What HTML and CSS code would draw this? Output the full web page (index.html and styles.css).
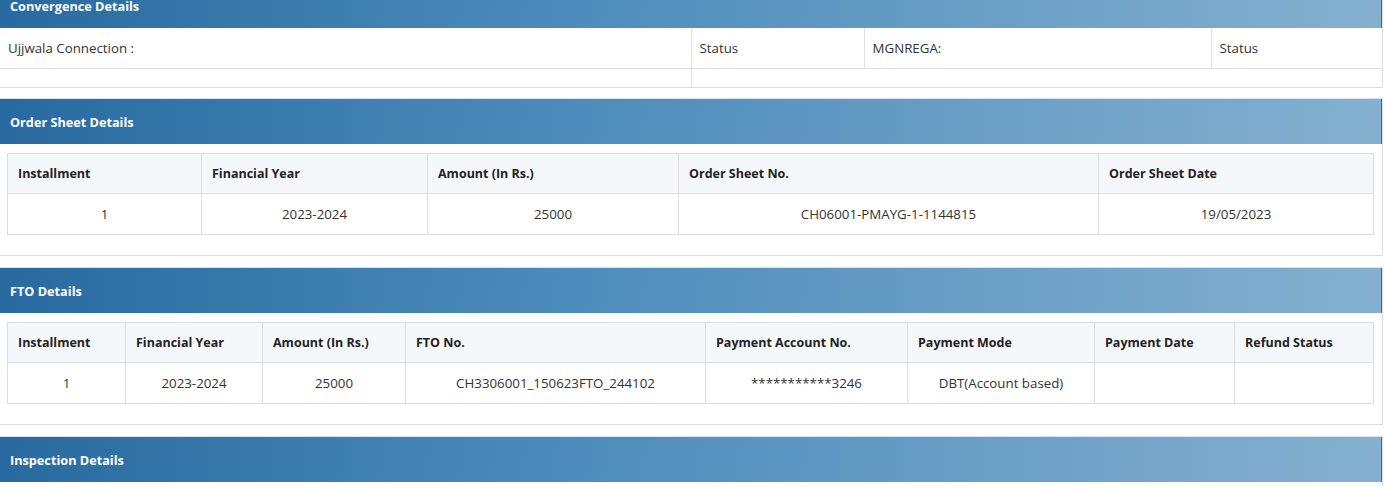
FILE: index.html
```html
<!DOCTYPE html>
<html>
<head>
<meta charset="utf-8">
<link rel="stylesheet" href="styles.css">
</head>
<body>
<div class="page">
  <section class="panel panel-first">
    <div class="panel-heading">Convergence Details</div>
    <table class="conv">
      <colgroup><col class="c1"><col class="c2"><col class="c3"><col class="c4"></colgroup>
      <tr class="conv-row"><td>Ujjwala Connection :</td><td>Status</td><td>MGNREGA:</td><td>Status</td></tr>
      <tr class="conv-empty"><td></td><td colspan="3"></td></tr>
    </table>
  </section>

  <section class="panel">
    <div class="panel-heading">Order Sheet Details</div>
    <div class="panel-body">
      <table class="grid">
        <colgroup><col class="o1"><col class="o2"><col class="o3"><col class="o4"><col class="o5"></colgroup>
        <tr class="head"><th>Installment</th><th>Financial Year</th><th>Amount (In Rs.)</th><th>Order Sheet No.</th><th>Order Sheet Date</th></tr>
        <tr class="body"><td>1</td><td>2023-2024</td><td>25000</td><td>CH06001-PMAYG-1-1144815</td><td>19/05/2023</td></tr>
      </table>
    </div>
  </section>

  <section class="panel">
    <div class="panel-heading">FTO Details</div>
    <div class="panel-body">
      <table class="grid">
        <colgroup><col class="f1"><col class="f2"><col class="f3"><col class="f4"><col class="f5"><col class="f6"><col class="f7"><col class="f8"></colgroup>
        <tr class="head"><th>Installment</th><th>Financial Year</th><th>Amount (In Rs.)</th><th>FTO No.</th><th>Payment Account No.</th><th>Payment Mode</th><th>Payment Date</th><th>Refund Status</th></tr>
        <tr class="body"><td>1</td><td>2023-2024</td><td>25000</td><td>CH3306001_150623FTO_244102</td><td>***********3246</td><td>DBT(Account based)</td><td></td><td></td></tr>
      </table>
    </div>
  </section>

  <section class="panel">
    <div class="panel-heading">Inspection Details</div>
    <div class="panel-body"></div>
  </section>
</div>
</body>
</html>
```

FILE: styles.css
```css
* { box-sizing: border-box; }
html, body { margin: 0; padding: 0; background: #fff; overflow: hidden; }
body {
  font-family: "Open Sans", "Noto Sans", sans-serif;
  font-size: 13.3px;
  color: #333;
}
.page { width: 1384px; }
.panel {
  width: 1384px;
  margin-left: -1px;
  margin-bottom: 11px;
  border: 1px solid #dddddd;
  border-top-color: #d8e3ee;
  background: #fff;
}
.panel-first { margin-top: -18px; margin-bottom: 10px; }
.panel-heading {
  height: 45px;
  display: flex;
  align-items: center;
  padding-left: 10px;
  color: #fff;
  font-weight: 700;
  font-size: 12.7px;
  background: linear-gradient(95deg, #286a9f 0%, #4b8bbb 40%, #6ea1c7 75%, #85b0d0 100%);
  border-right: 1px solid #3b6f9a;
}
.panel-body {
  padding: 9px 7px 20px 7px;
  min-height: 45px;
}
table { border-collapse: collapse; table-layout: fixed; }
.conv { width: 1382px; }
.conv td { border: 1px solid #e0e0e0; padding: 0 0 0 8px; }
.conv tr:first-child td { border-top: none; }
.conv td:first-child { border-left: none; }
.conv td:last-child { border-right: none; }
.conv tr:last-child td { border-bottom: none; }
.conv-row td { height: 40px; }
.conv-empty td { height: 19px; }
.conv .c1 { width: 691px; }
.conv .c2 { width: 173px; }
.conv .c3 { width: 347px; }
.conv .c4 { width: 171px; }

.grid { width: 1366px; }
.grid th, .grid td { border: 1px solid #dddddd; padding: 0 10px; }
.grid .head th {
  height: 40px;
  text-align: left;
  font-weight: 700;
  font-size: 12.5px;
  background: #f5f8fa;
  color: #222;
}
.grid .body td { height: 41px; text-align: center; }
.o1 { width: 194px; } .o2 { width: 226px; } .o3 { width: 251px; } .o4 { width: 420px; } .o5 { width: 275px; }
.f1 { width: 118px; } .f2 { width: 137px; } .f3 { width: 143px; } .f4 { width: 300px; }
.f5 { width: 202px; } .f6 { width: 187px; } .f7 { width: 140px; } .f8 { width: 139px; }
```
